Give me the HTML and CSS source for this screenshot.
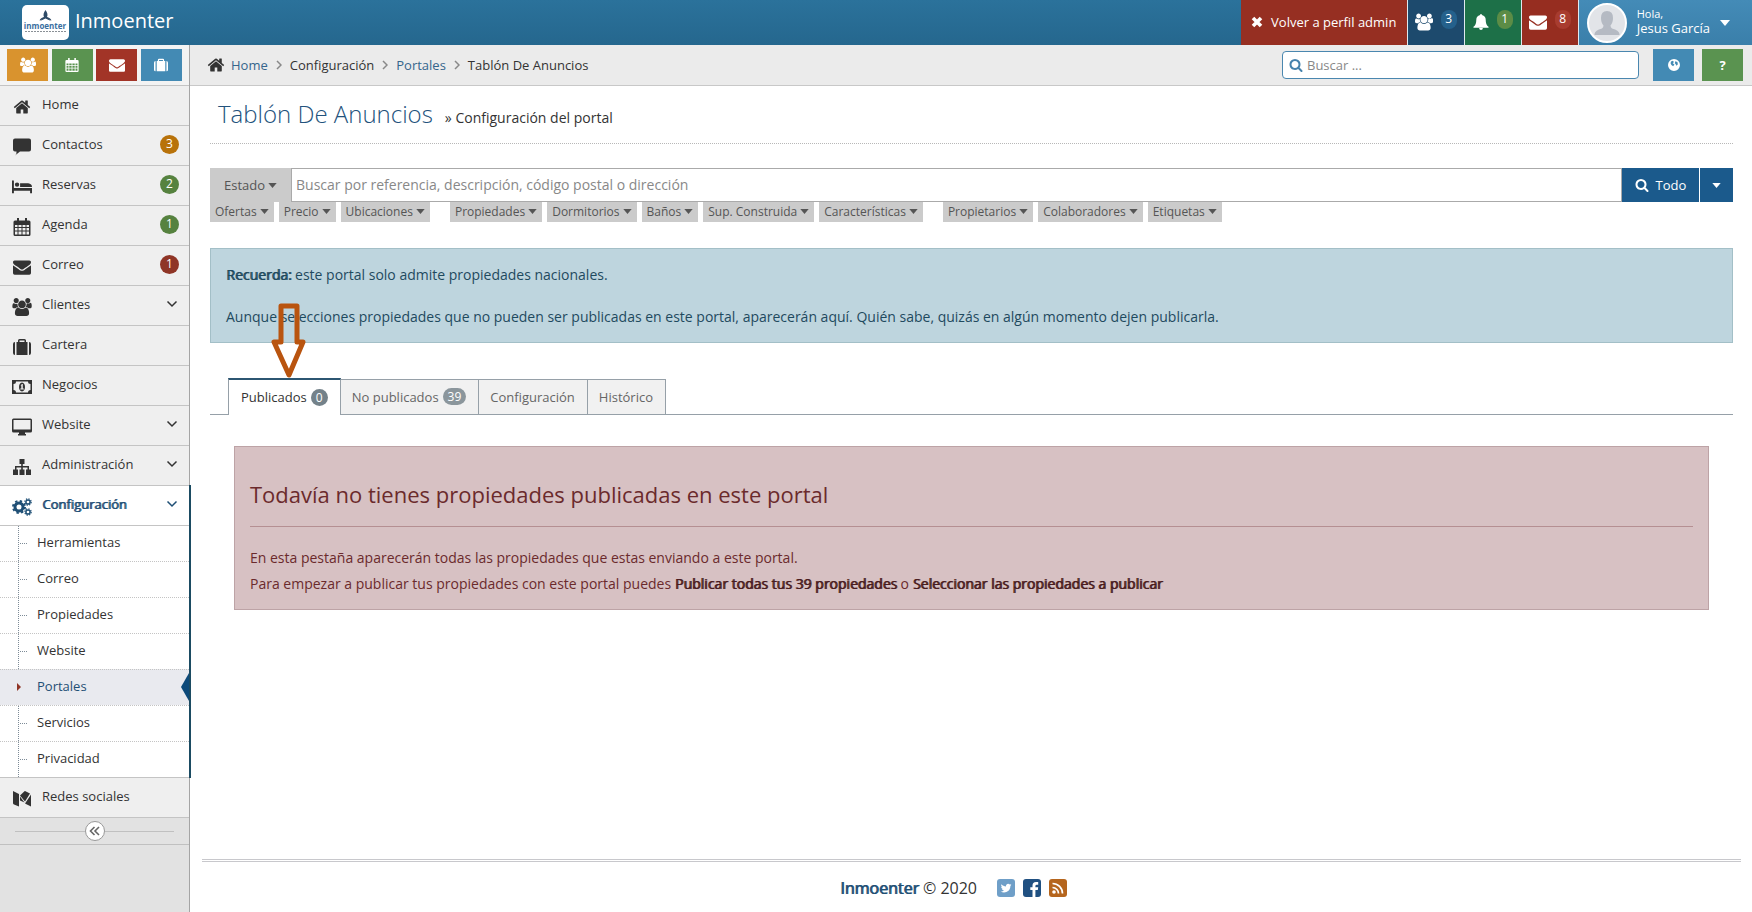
FILE: index.html
```html
<!DOCTYPE html>
<html lang="es">
<head>
<meta charset="utf-8">
<title>Tablón De Anuncios - Inmoenter</title>
<link rel="stylesheet" href="styles.css">
</head>
<body>
<svg class="sprite" aria-hidden="true">
  <symbol id="i-home" viewBox="0 0 1664 1792"><path d="M1408 992v480q0 26-19 45t-45 19h-384v-384h-256v384h-384q-26 0-45-19t-19-45v-480q0-1 .5-3t.5-3l575-474 575 474q1 2 1 6zm223-69l-62 74q-8 9-21 11h-3q-13 0-21-7l-692-577-692 577q-12 8-24 7-13-2-21-11l-62-74q-8-10-7-23.5t11-21.5l719-599q32-26 76-26t76 26l244 204v-195q0-14 9-23t23-9h192q14 0 23 9t9 23v408l219 182q10 8 11 21.5t-7 23.5z"/></symbol>
  <symbol id="i-users" viewBox="0 0 1920 1792"><path d="M593 896q-162 5-265 128h-134q-82 0-138-40.500t-56-118.500q0-353 124-353 6 0 43.500 21t97.500 42.500 119 21.500q67 0 133-23-5 37-5 66 0 159 93 294zm1071 637q0 120-73 189.500t-194 69.500h-874q-121 0-194-69.500t-73-189.500q0-53 3.500-103.500t14-109 26.500-108.500 43-97.500 62-81 85.500-53.500 111.500-20q10 0 43 21.500t73 48 107 48 135 21.500 135-21.500 107-48 73-48 43-21.500q61 0 111.500 20t85.500 53.500 62 81 43 97.500 26.500 108.500 14 109 3.500 103.500zm-1024-1277q0 106-75 181t-181 75-181-75-75-181 75-181 181-75 181 75 75 181zm704 384q0 159-112.500 271.500t-271.500 112.500-271.500-112.500-112.500-271.500 112.500-271.500 271.500-112.500 271.500 112.500 112.500 271.500zm576 225q0 78-56 118.500t-138 40.500h-134q-103-123-265-128 93-135 93-294 0-29-5-66 66 23 133 23 59 0 119-21.500t97.500-42.500 43.500-21q124 0 124 353zm-128-609q0 106-75 181t-181 75-181-75-75-181 75-181 181-75 181 75 75 181z"/></symbol>
  <symbol id="i-mail" viewBox="0 0 1792 1792"><path d="M1792 710v794q0 66-47 113t-113 47h-1472q-66 0-113-47t-47-113v-794q44 49 101 87 362 246 497 345 57 42 92.500 65.500t94.500 48 110 24.500h2q51 0 110-24.500t94.500-48 92.500-65.500q170-123 498-345 57-39 100-87zm0-294q0 79-49 151t-122 123q-376 261-468 325-10 7-42.500 31t-54 38.500-52 32.500-57.500 27-50 9h-2q-23 0-50-9t-57.500-27-52-32.500-54-38.500-42.500-31q-91-64-262-182.500t-205-142.500q-62-42-117-115.500t-55-136.500q0-78 41.500-130t118.500-52h1472q65 0 112.500 47t47.500 113z"/></symbol>
  <symbol id="i-search" viewBox="0 0 1664 1792"><path d="M1152 832q0-185-131.500-316.500t-316.500-131.500-316.500 131.500-131.500 316.500 131.500 316.500 316.500 131.500 316.500-131.500 131.500-316.500zm512 832q0 52-38 90t-90 38q-54 0-90-38l-343-342q-179 124-399 124-143 0-273.500-55.500t-225-150-150-225-55.500-273.500 55.500-273.500 150-225 225-150 273.500-55.500 273.500 55.500 225 150 150 225 55.500 273.500q0 220-124 399l343 343q37 37 37 90z"/></symbol>
  <symbol id="i-cal" viewBox="0 0 18 18"><path fill-rule="evenodd" d="M4 0h2v2.500h6V0h2v2.500h2q1.500 0 1.500 1.500v12.500q0 1.500-1.500 1.500H2Q.5 18 .5 16.500V4Q.5 2.500 2 2.500h2zM2 7v2h2.500V7zm3.500 0v2h3V7zm4 0v2h3V7zm4 0v2H16V7zM2 10v2.500h2.500V10zm3.500 0v2.500h3V10zm4 0v2.500h3V10zm4 0v2.500H16V10zM2 13.500v3h2.500v-3zm3.500 0v3h3v-3zm4 0v3h3v-3zm4 0v3H16v-3z"/></symbol>
  <symbol id="i-case" viewBox="0 0 18 16"><path fill-rule="evenodd" d="M0 5q0-2 2-2v13q-2 0-2-2zM3.500 3H5V1.500Q5 0 6.500 0h5Q13 0 13 1.500V3h1.500v13h-11zM6.500 1.500V3h5V1.500zM16 3q2 0 2 2v9q0 2-2 2z"/></symbol>
  <symbol id="i-comment" viewBox="0 0 18 17"><path d="M2 0h14q2 0 2 2v9q0 2-2 2H7l-5 4q2-2 1.500-4H2q-2 0-2-2V2q0-2 2-2z"/></symbol>
  <symbol id="i-bed" viewBox="0 0 21 14"><path d="M0 1q0-1 1-1t1 1v7h19v5.500h-2V11H2v2.500H0zM3 4.500a2.300 2.300 0 1 1 4.600 0 2.300 2.300 0 1 1-4.600 0zM8.500 3H17q4 .5 4 4H8.500z"/></symbol>
  <symbol id="i-money" viewBox="0 0 20 14"><path fill-rule="evenodd" d="M0 0h20v14H0zM4 1.500Q4 4 1.500 4v6Q4 10 4 12.500h12q0-2.500 2.500-2.500V4Q16 4 16 1.500zM10 2.500c4 0 4 9 0 9s-4-9 0-9zM8.500 5.500h.8V8.500h-1v1h3.500v-1h-1V4H10z"/></symbol>
  <symbol id="i-screen" viewBox="0 0 20 17"><path fill-rule="evenodd" d="M1.500 0h17Q20 0 20 1.500v11q0 1.500-1.500 1.500H13v1.500h1V17H6v-1.500h1V14H1.500Q0 14 0 12.500v-11Q0 0 1.500 0zm0 1.500V11h17V1.500z"/></symbol>
  <symbol id="i-tree" viewBox="0 0 18 16"><path d="M6.500 0h5v5h-1.700v2H16v3.500h2V16h-5v-5.500h1.500V8.500H9.800v2h1.700V16h-5v-5.500h1.700v-2H3.500v2H5V16H0v-5.500h2V7h6.200V5H6.500z"/></symbol>
  <symbol id="i-cogs" viewBox="0 0 20 18"><circle cx="7" cy="9" r="4" fill="none" stroke="currentColor" stroke-width="3"/><circle cx="7" cy="9" r="6" fill="none" stroke="currentColor" stroke-width="2" stroke-dasharray="2.360 2.360"/><circle cx="16" cy="4" r="2.100" fill="none" stroke="currentColor" stroke-width="1.500"/><circle cx="16" cy="4" r="3.200" fill="none" stroke="currentColor" stroke-width="1.200" stroke-dasharray="1.260 1.260"/><circle cx="16" cy="14" r="2.100" fill="none" stroke="currentColor" stroke-width="1.500"/><circle cx="16" cy="14" r="3.200" fill="none" stroke="currentColor" stroke-width="1.200" stroke-dasharray="1.260 1.260"/></symbol>
  <symbol id="i-medium" viewBox="0 0 18 16"><path d="M0 0l6 3v12.500L1 13.500Q0 13 0 12zM7 4.500l4.500-4.200q.5-.5 1 0L17 2.500l-5 8zM7 5.500l4.500 6-4.500-2zM18 3.500v12L12 12.500z"/></symbol>
  <symbol id="i-down" viewBox="0 0 12 8"><path d="M1.500 1.500L6 6l4.500-4.500" fill="none" stroke="currentColor" stroke-width="1.500"/></symbol>
  <symbol id="i-right" viewBox="0 0 6 10"><path d="M1 1l4 4-4 4" fill="none" stroke="currentColor" stroke-width="1.500"/></symbol>
  <symbol id="i-caret" viewBox="0 0 10 6"><path d="M0 0h10L5 6z"/></symbol>
  <symbol id="i-times" viewBox="0 0 12 12"><path d="M2 2l8 8M10 2l-8 8" stroke="currentColor" stroke-width="3.600"/></symbol>
  <symbol id="i-bell" viewBox="0 0 16 17"><path d="M8 0q1 0 1 1 4 1 4 5 0 6 3 7.500v1H0v-1Q3 12 3 6q0-4 4-5 0-1 1-1zM6 15h4q0 2-2 2t-2-2z"/></symbol>
  <symbol id="i-globe" viewBox="0 0 14 14"><path fill-rule="evenodd" d="M7 0a7 7 0 1 1 0 14A7 7 0 1 1 7 0zM3.500 3l2-1L7 3.500 5.500 5l2 1.500L6 8.500 4 7 3 5zM8.500 2.500l2.500 1 .5 2.500-1.500 2-1-2L8 5z"/></symbol>
  <symbol id="i-left2" viewBox="0 0 12 10"><path d="M5.500 1l-4 4 4 4M10 1L6 5l4 4" fill="none" stroke="currentColor" stroke-width="1.600"/></symbol>
  <symbol id="i-twitter" viewBox="0 0 18 18"><rect width="18" height="18" rx="3" fill="#6f9fc8"/><path fill="#fff" transform="translate(3 3) scale(.0068)" d="M1684 408q-67 98-162 167 1 14 1 42 0 130-38 259.500t-115.500 248.500-184.500 210.500-258 146-323 54.500q-271 0-496-145 35 4 78 4 225 0 401-138-105-2-188-64.500t-114-159.500q33 5 61 5 43 0 85-11-112-23-185.500-111.500t-73.500-205.500v-4q68 38 146 41-66-44-105-115t-39-154q0-88 44-163 121 149 294.500 238.500t371.500 99.500q-8-38-8-74 0-134 94.500-228.500t228.500-94.500q140 0 236 102 109-21 205-78-37 115-142 178 93-10 186-50z"/></symbol>
  <symbol id="i-facebook" viewBox="0 0 18 18"><rect width="18" height="18" rx="3" fill="#205081"/><path fill="#fff" d="M9.500 18v-7H7.300V8.300h2.200V6.500q0-3.500 3.500-3.500h2.200v2.700h-1.500q-1.300 0-1.300 1.200v1.400h2.800l-.4 2.700h-2.400v7z"/></symbol>
  <symbol id="i-rss" viewBox="0 0 18 18"><rect width="18" height="18" rx="3" fill="#b5651d"/><circle cx="5" cy="13" r="1.800" fill="#fff"/><path d="M3.500 8.500a6 6 0 0 1 6 6M3.500 4.500a10 10 0 0 1 10 10" fill="none" stroke="#fff" stroke-width="1.700"/></symbol>
</svg>

<header class="navbar">
  <a class="brand" href="#">
    <svg class="brand-logo" viewBox="0 0 47 35" role="img" aria-label="Inmoenter">
      <rect width="47" height="35" rx="5" fill="#fff"/>
      <path d="M23.500 5q3 4 1.500 7l4 4-5.500-2.500-5.500 2.500 4-4q-1.500-3 1.500-7z" fill="#2e4a66"/><path d="M17.500 15.500q1-3 5-3.500l-1 2zM29.500 15.500q-1-3-5-3.500l1 2z" fill="#2e4a66"/>
      <text x="23" y="24" class="logo-name">inmoenter</text>
      <path d="M3 26.500h41" stroke="#8a9096" stroke-dasharray="2 1" />
    </svg>
    <span>Inmoenter</span>
  </a>
  <nav class="nav-actions">
    <a class="nav-btn nav-back" href="#"><svg class="ic ic-12"><use href="#i-times"/></svg>Volver a perfil admin</a>
    <a class="nav-btn nav-blue" href="#"><svg class="ic ic-18"><use href="#i-users"/></svg><span class="pill pill-blue">3</span></a>
    <a class="nav-btn nav-green" href="#"><svg class="ic ic-16"><use href="#i-bell"/></svg><span class="pill pill-green">1</span></a>
    <a class="nav-btn nav-red" href="#"><svg class="ic ic-18"><use href="#i-mail"/></svg><span class="pill pill-red">8</span></a>
    <button class="user" type="button">
      <svg class="avatar" viewBox="0 0 40 40"><circle cx="20" cy="20" r="19" fill="#e2e4e8" stroke="#fff" stroke-width="2"/><path d="M20 8q6 0 6 7 0 5-2.500 7.500 0 2 1.500 3 7 1.500 7.500 5.500v1h-25v-1q.5-4 7.500-5.500 1.500-1 1.500-3Q14 20 14 15q0-7 6-7z" fill="#b5bac3"/></svg>
      <span class="user-text"><small>Hola,</small><span>Jesus García</span></span>
      <svg class="ic ic-caret"><use href="#i-caret"/></svg>
    </button>
  </nav>
</header>

<div class="page">
  <aside class="sidebar">
    <div class="shortcuts">
      <button class="sc sc-orange" type="button" aria-label="Clientes"><svg class="ic ic-16"><use href="#i-users"/></svg></button>
      <button class="sc sc-green" type="button" aria-label="Agenda"><svg class="ic ic-14"><use href="#i-cal"/></svg></button>
      <button class="sc sc-red" type="button" aria-label="Correo"><svg class="ic ic-16"><use href="#i-mail"/></svg></button>
      <button class="sc sc-blue" type="button" aria-label="Cartera"><svg class="ic ic-14"><use href="#i-case"/></svg></button>
    </div>
    <ul class="menu">
      <li><a href="#"><svg class="ic ic-menu"><use href="#i-home"/></svg><span>Home</span></a></li>
      <li><a href="#"><svg class="ic ic-menu"><use href="#i-comment"/></svg><span>Contactos</span><b class="count count-orange">3</b></a></li>
      <li><a href="#"><svg class="ic ic-menu wide"><use href="#i-bed"/></svg><span>Reservas</span><b class="count count-green">2</b></a></li>
      <li><a href="#"><svg class="ic ic-menu"><use href="#i-cal"/></svg><span>Agenda</span><b class="count count-green">1</b></a></li>
      <li><a href="#"><svg class="ic ic-menu"><use href="#i-mail"/></svg><span>Correo</span><b class="count count-red">1</b></a></li>
      <li><a href="#"><svg class="ic ic-menu wide"><use href="#i-users"/></svg><span>Clientes</span><svg class="ic arrow"><use href="#i-down"/></svg></a></li>
      <li><a href="#"><svg class="ic ic-menu"><use href="#i-case"/></svg><span>Cartera</span></a></li>
      <li><a href="#"><svg class="ic ic-menu wide"><use href="#i-money"/></svg><span>Negocios</span></a></li>
      <li><a href="#"><svg class="ic ic-menu wide"><use href="#i-screen"/></svg><span>Website</span><svg class="ic arrow"><use href="#i-down"/></svg></a></li>
      <li><a href="#"><svg class="ic ic-menu"><use href="#i-tree"/></svg><span>Administración</span><svg class="ic arrow"><use href="#i-down"/></svg></a></li>
      <li class="open">
        <a href="#"><svg class="ic ic-menu wide"><use href="#i-cogs"/></svg><span class="strong">Configuración</span><svg class="ic arrow"><use href="#i-down"/></svg></a>
        <ul class="submenu">
          <li><a href="#">Herramientas</a></li>
          <li><a href="#">Correo</a></li>
          <li><a href="#">Propiedades</a></li>
          <li><a href="#">Website</a></li>
          <li class="current"><a href="#">Portales</a></li>
          <li><a href="#">Servicios</a></li>
          <li><a href="#">Privacidad</a></li>
        </ul>
      </li>
      <li><a href="#"><svg class="ic ic-menu"><use href="#i-medium"/></svg><span>Redes sociales</span></a></li>
    </ul>
    <div class="collapse"><button type="button" aria-label="Contraer menú"><svg class="ic ic-12"><use href="#i-left2"/></svg></button></div>
  </aside>

  <div class="main">
    <div class="crumbs">
      <nav class="trail">
        <svg class="ic ic-18"><use href="#i-home"/></svg>
        <a href="#">Home</a><svg class="ic sep"><use href="#i-right"/></svg>
        <span>Configuración</span><svg class="ic sep"><use href="#i-right"/></svg>
        <a href="#">Portales</a><svg class="ic sep"><use href="#i-right"/></svg>
        <span>Tablón De Anuncios</span>
      </nav>
      <label class="quick"><svg class="ic ic-14"><use href="#i-search"/></svg><input type="text" placeholder="Buscar ..." aria-label="Buscar"></label>
      <button class="sc sc-blue" type="button" aria-label="Idioma"><svg class="ic ic-12"><use href="#i-globe"/></svg></button>
      <button class="sc sc-green" type="button" aria-label="Ayuda"><b>?</b></button>
    </div>

    <main class="content">
      <div class="title"><h1>Tablón De Anuncios</h1><p>» Configuración del portal</p></div>

      <form class="finder">
        <button class="estado" type="button">Estado<svg class="ic tri"><use href="#i-caret"/></svg></button>
        <input type="text" aria-label="Buscar propiedades" placeholder="Buscar por referencia, descripción, código postal o dirección">
        <button class="go" type="button"><svg class="ic ic-14"><use href="#i-search"/></svg>Todo</button>
        <button class="go-more" type="button" aria-label="Más opciones"><svg class="ic tri"><use href="#i-caret"/></svg></button>
      </form>
      <div class="filters">
        <div class="group">
          <button type="button">Ofertas<svg class="ic tri"><use href="#i-caret"/></svg></button>
          <button type="button">Precio<svg class="ic tri"><use href="#i-caret"/></svg></button>
          <button type="button">Ubicaciones<svg class="ic tri"><use href="#i-caret"/></svg></button>
        </div>
        <div class="group">
          <button type="button">Propiedades<svg class="ic tri"><use href="#i-caret"/></svg></button>
          <button type="button">Dormitorios<svg class="ic tri"><use href="#i-caret"/></svg></button>
          <button type="button">Baños<svg class="ic tri"><use href="#i-caret"/></svg></button>
          <button type="button">Sup. Construida<svg class="ic tri"><use href="#i-caret"/></svg></button>
          <button type="button">Características<svg class="ic tri"><use href="#i-caret"/></svg></button>
        </div>
        <div class="group">
          <button type="button">Propietarios<svg class="ic tri"><use href="#i-caret"/></svg></button>
          <button type="button">Colaboradores<svg class="ic tri"><use href="#i-caret"/></svg></button>
          <button type="button">Etiquetas<svg class="ic tri"><use href="#i-caret"/></svg></button>
        </div>
      </div>

      <div class="alert info">
        <p><span class="strong">Recuerda:</span> este portal solo admite propiedades nacionales.</p>
        <p>Aunque selecciones propiedades que no pueden ser publicadas en este portal, aparecerán aquí. Quién sabe, quizás en algún momento dejen publicarla.</p>
      </div>

      <div class="tabs" role="tablist">
        <button class="tab active" type="button" role="tab" aria-selected="true">Publicados<span class="num">0</span>
          <svg class="pointer" viewBox="0 0 36 78" aria-hidden="true"><path d="M10 4h16v36h6L18 73 3 40h7z" fill="none" stroke="#b9540f" stroke-width="5" stroke-linejoin="round"/></svg>
        </button>
        <button class="tab" type="button" role="tab">No publicados<span class="num">39</span></button>
        <button class="tab" type="button" role="tab">Configuración</button>
        <button class="tab" type="button" role="tab">Histórico</button>
      </div>

      <section class="alert danger">
        <h2>Todavía no tienes propiedades publicadas en este portal</h2>
        <hr>
        <p>En esta pestaña aparecerán todas las propiedades que estas enviando a este portal.</p>
        <p>Para empezar a publicar tus propiedades con este portal puedes <a class="strong" href="#">Publicar todas tus 39 propiedades</a> o <a class="strong" href="#">Seleccionar las propiedades a publicar</a></p>
      </section>
    </main>

    <footer class="footer">
      <p><span class="strong">Inmoenter</span> © 2020</p>
      <div class="social">
        <a href="#" aria-label="Twitter"><svg class="ic ic-18"><use href="#i-twitter"/></svg></a>
        <a href="#" aria-label="Facebook"><svg class="ic ic-18"><use href="#i-facebook"/></svg></a>
        <a href="#" aria-label="RSS"><svg class="ic ic-18"><use href="#i-rss"/></svg></a>
      </div>
    </footer>
  </div>
</div>
</body>
</html>
```

FILE: styles.css
```css
* { box-sizing: border-box; }
body {
  margin: 0;
  min-height: 100vh;
  display: flex;
  flex-direction: column;
  font: 13px/20px "Open Sans", sans-serif;
  color: #333;
  background: #fff;
}
a { color: inherit; text-decoration: none; }
p, h1, h2, ul { margin: 0; padding: 0; }
ul { list-style: none; }
button, input { font: inherit; color: inherit; border: 0; margin: 0; border-radius: 0; }
button { display: flex; align-items: center; justify-content: center; padding: 0; cursor: pointer; }
input::placeholder { color: #888; opacity: 1; }

.sprite { position: absolute; width: 0; height: 0; }
.ic { display: block; flex: none; fill: currentColor; }
.ic-12 { width: 12px; height: 12px; }
.ic-14 { width: 14px; height: 14px; }
.ic-16 { width: 16px; height: 16px; }
.ic-18 { width: 18px; height: 18px; }
.tri { width: 9px; height: 5px; }
.strong { text-shadow: 1px 0 0 currentColor; }

/* Top bar */
.navbar {
  display: flex;
  justify-content: space-between;
  height: 45px;
  padding-left: 22px;
  color: #fff;
  background: linear-gradient(#2b729b, #25678e);
}
.brand { display: flex; align-items: center; gap: 6px; font-size: 20px; line-height: 40px; padding-bottom: 4px; }
.brand-logo { width: 47px; height: 35px; margin-top: 4px; }
.logo-name { font: 700 8px "Open Sans", sans-serif; fill: #3a6ea0; text-anchor: middle; }
.nav-actions { display: flex; gap: 1px; background: #dfe9ef; }
.nav-btn { display: flex; align-items: center; justify-content: center; gap: 8px; width: 56px; padding-bottom: 2px; }
.nav-back { width: 166px; background: #962f22; }
.nav-blue { background: #1d4a6d; }
.nav-green { background: #1d7048; }
.nav-red { background: #962d20; }
.pill { min-width: 16px; height: 19px; margin-bottom: 4px; border-radius: 8px; line-height: 18px; font-size: 12px; text-align: center; }
.pill-blue { background: #24618c; }
.pill-green { background: #5c8c46; }
.pill-red { background: #a83c2f; }
.user { gap: 10px; padding: 0 22px 0 8px; color: #fff; background: linear-gradient(#448bb7, #3a7faa); }
.avatar { width: 40px; height: 40px; }
.user-text { display: flex; flex-direction: column; padding-bottom: 3px; line-height: 14px; text-align: left; }
.user-text small { font-size: 11px; }
.ic-caret { width: 10px; height: 6px; }

.page { display: flex; flex: 1; }

/* Sidebar */
.sidebar { width: 190px; flex: none; background: #e2e2e2; border-right: 1px solid #a5a5a5; }
.shortcuts { display: flex; justify-content: space-between; height: 41px; padding: 4px 7px; background: #f3f3f3; border-bottom: 1px solid #c4c4c4; }
.sc { width: 41px; height: 32px; color: #fff; }
.sc-orange { background: #d9932e; }
.sc-green { background: #5a9350; }
.sc-red { background: #a23427; }
.sc-blue { background: #438ab4; }
.menu > li > a { display: flex; align-items: center; height: 40px; padding: 0 11px 3px 13px; background: #efefef; border-bottom: 1px solid #c4c4c4; }
.menu > li > a > span { flex: 1; margin-left: 11px; }
.ic-menu { width: 18px; height: 18px; margin-top: 5px; }
.ic-menu.wide { width: 20px; margin-left: -1px; margin-right: -1px; }
.arrow { width: 12px; height: 8px; }
.count { width: 19px; height: 19px; border-radius: 10px; color: #fff; font-size: 12px; font-weight: 400; line-height: 18px; text-align: center; margin-right: -1px; }
.count-orange { background: #b8720a; }
.count-green { background: #56823f; }
.count-red { background: #8f3526; }
.open { position: relative; }
.open::after { content: ""; position: absolute; top: -1px; bottom: 0; right: -2px; width: 2px; background: #1b4b62; }
.menu > .open > a { background: #fff; color: #1f4f75; }
.submenu { position: relative; background: #fff; border-bottom: 1px solid #c4c4c4; }
.submenu::before { content: ""; position: absolute; left: 18px; top: 0; bottom: 0; border-left: 1px dotted #7d8b97; }
.submenu li { position: relative; }
.submenu li + li { border-top: 1px dotted #c4c4c4; }
.submenu a { display: block; height: 35px; padding: 6px 0 0 37px; }
.submenu li::before { content: ""; position: absolute; left: 20px; top: 17px; width: 7px; border-top: 1px dotted #7d8b97; }
.submenu .current { background: #e9eaef; color: #1f4f75; }
.submenu .current::before { left: 17px; top: 13px; width: 0; border: 4px solid transparent; border-left-color: #8f3526; border-right: 0; }
.submenu .current::after { content: ""; position: absolute; right: 0; top: 3px; border: 14px solid transparent; border-right: 8px solid #0d4a7a; border-left: 0; }
.collapse { display: flex; align-items: center; height: 27px; padding: 0 15px; border-bottom: 1px solid #c0c0c0; }
.collapse::before, .collapse::after { content: ""; flex: 1; border-top: 1px solid #c0c0c0; }
.collapse button { width: 20px; height: 20px; border: 1px solid #999; border-radius: 10px; background: #fff; color: #666; }

/* Breadcrumb bar */
.main { flex: 1; min-width: 0; display: flex; flex-direction: column; }
.crumbs { display: flex; align-items: center; height: 41px; padding: 0 9px 0 17px; background: #ebebeb; border-bottom: 1px solid #c8c8c8; }
.trail { display: flex; align-items: center; flex: 1; }
.trail > .ic-18 { margin-right: 6px; }
.trail a { color: #35658c; }
.sep { width: 6px; height: 10px; margin: 0 8px; color: #888; }
.quick { display: flex; align-items: center; width: 357px; height: 28px; margin-right: 14px; padding: 0 6px; border: 1px solid #4a87af; border-radius: 4px; background: #fff; color: #4682ac; }
.quick input { flex: 1; min-width: 0; padding: 0 4px; background: none; color: #333; outline: 0; }
.crumbs .sc + .sc { margin-left: 8px; }

/* Content */
.content { padding: 0 19px 0 20px; }
.title { display: flex; align-items: baseline; gap: 12px; height: 58px; padding: 10px 8px 0; border-bottom: 1px dotted #b8b8b8; }
.title h1 { font-size: 24px; line-height: 36px; font-weight: 300; color: #23527c; }
.title p { font-size: 14px; }
.finder { display: flex; height: 34px; margin-top: 24px; }
.estado { width: 81px; gap: 3px; background: #cbcbcb; color: #555; }
.finder input { flex: 1; min-width: 0; padding: 0 4px; font-size: 14px; border: 1px solid #aaa; background: #fff; outline: 0; }
.go { width: 77px; gap: 7px; color: #fff; background: #1b5a8c; }
.go-more { width: 33px; margin-left: 1px; color: #fff; background: #1b5a8c; }
.filters { display: flex; gap: 20px; }
.group { display: flex; gap: 5px; }
.group button { height: 20px; padding: 0 5px 1px; gap: 3px; font-size: 12px; color: #555; background: #cbcbcb; }

.alert { padding: 15px; border: 1px solid; font-size: 14px; }
.info { margin-top: 26px; padding-bottom: 14px; color: #1f4a5e; background: #bed5de; border-color: #a3bfc7; }
.info p { line-height: 22px; }
.info p + p { margin-top: 20px; }
.tabs { display: flex; align-items: flex-end; margin-top: 35px; padding-left: 18px; border-bottom: 1px solid #96a0a8; }
.tab { height: 35px; padding: 0 12px 1px 11px; gap: 4px; color: #666; background: #f1f1f1; border: 1px solid #96a0a8; border-width: 1px 1px 0 0; }
.tab.active { position: relative; height: 37px; padding-left: 12px; margin-bottom: -1px; color: #333; background: #fff; border-width: 2px 1px 0; border-top-color: #2c5672; }
.num { min-width: 17px; height: 17px; padding: 0 5px; border-radius: 9px; color: #fff; background: #8b969c; font-size: 12px; line-height: 17px; }
.active .num { background: #74828a; }
.pointer { position: absolute; left: 42px; top: -78px; width: 36px; height: 78px; }
.danger { margin: 31px 24px 0; padding-bottom: 12px; color: #6b2a2c; background: #d7c1c3; border-color: #bda3a6; }
.danger h2 { margin-top: 16px; font-size: 22px; line-height: 32px; font-weight: 400; }
.danger hr { margin: 16px 0 18px; border: 0; border-top: 1px solid #b58f92; }
.danger p { line-height: 26px; }
.danger a { color: #4a1c20; }

.footer { display: flex; justify-content: center; align-items: center; gap: 20px; height: 53px; margin: auto 11px 0 12px; padding: 2px 36px 0 0; border-top: 3px double #c8c8cc; font-size: 16px; }
.footer .strong { color: #1f4f75; }
.social { display: flex; gap: 8px; }
```
